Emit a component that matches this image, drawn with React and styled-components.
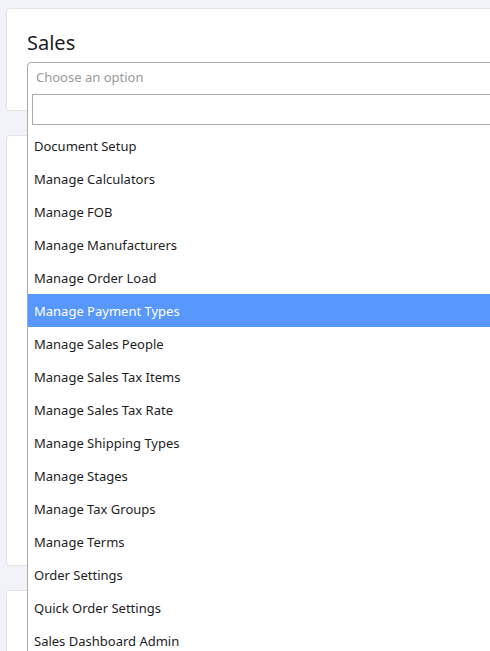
import React from 'react';
import styled, { createGlobalStyle } from 'styled-components';

const GlobalStyle = createGlobalStyle`
  html, body {
    margin: 0;
    padding: 0;
    background: #f2f3f8;
    overflow: hidden;
    font-family: "Noto Sans", "Open Sans", sans-serif;
  }
`;

const Page = styled.div`
  width: 640px;
  padding: 8px 0 0 6px;
  display: flex;
  flex-direction: column;
  gap: 24px;
`;

const Card = styled.div`
  position: relative;
  z-index: ${(p) => (p.$top ? 2 : 1)};
  background: #fff;
  border: 1px solid #e3e4e8;
  border-radius: 4px;
  height: ${(p) => p.$height}px;
  padding: 21px 20px 0 20px;
  box-sizing: border-box;
`;

const Title = styled.h3`
  margin: 0 0 6px 0;
  font-size: 20px;
  font-weight: 400;
  color: #1d1d1f;
  line-height: 26px;
`;

const SelectWrap = styled.div`
  position: relative;
`;

const SelectBox = styled.div`
  height: 27px;
  border: 1px solid #aaa;
  border-radius: 4px 4px 0 0;
  box-sizing: border-box;
  display: flex;
  align-items: center;
  padding: 3px 0 0 8px;
  font-size: 13px;
  color: #999;
`;

const Dropdown = styled.div`
  position: absolute;
  top: 26px;
  left: 0;
  right: 0;
  z-index: 5;
  background: #fff;
  border: 1px solid #aaa;
  border-top: none;
`;

const SearchRow = styled.div`
  padding: 6px 4px 4px 4px;
`;

const SearchInput = styled.input`
  display: block;
  width: 100%;
  height: 31px;
  box-sizing: border-box;
  border: 1px solid #aaa;
  outline: none;
  padding: 4px;
  font-size: 13px;
  font-family: inherit;
`;

const Options = styled.ul`
  list-style: none;
  margin: 0;
  padding: 0;
`;

const Option = styled.li`
  height: 33px;
  display: flex;
  align-items: center;
  padding-left: 6px;
  font-size: 13px;
  color: ${(p) => (p.$active ? '#fff' : '#1d1d1f')};
  background: ${(p) => (p.$active ? '#5897fb' : 'transparent')};
`;

const options = [
  'Document Setup',
  'Manage Calculators',
  'Manage FOB',
  'Manage Manufacturers',
  'Manage Order Load',
  'Manage Payment Types',
  'Manage Sales People',
  'Manage Sales Tax Items',
  'Manage Sales Tax Rate',
  'Manage Shipping Types',
  'Manage Stages',
  'Manage Tax Groups',
  'Manage Terms',
  'Order Settings',
  'Quick Order Settings',
  'Sales Dashboard Admin',
  'Sales Settings',
];

const App = () => (
  <>
    <GlobalStyle />
    <Page>
      <Card $height={103} $top>
        <Title>Sales</Title>
        <SelectWrap>
          <SelectBox>Choose an option</SelectBox>
          <Dropdown>
            <SearchRow>
              <SearchInput type="text" />
            </SearchRow>
            <Options>
              {options.map((o) => (
                <Option key={o} $active={o === 'Manage Payment Types'}>
                  {o}
                </Option>
              ))}
            </Options>
          </Dropdown>
        </SelectWrap>
      </Card>
      <Card $height={431} />
      <Card $height={200} />
    </Page>
  </>
);

export default App;
